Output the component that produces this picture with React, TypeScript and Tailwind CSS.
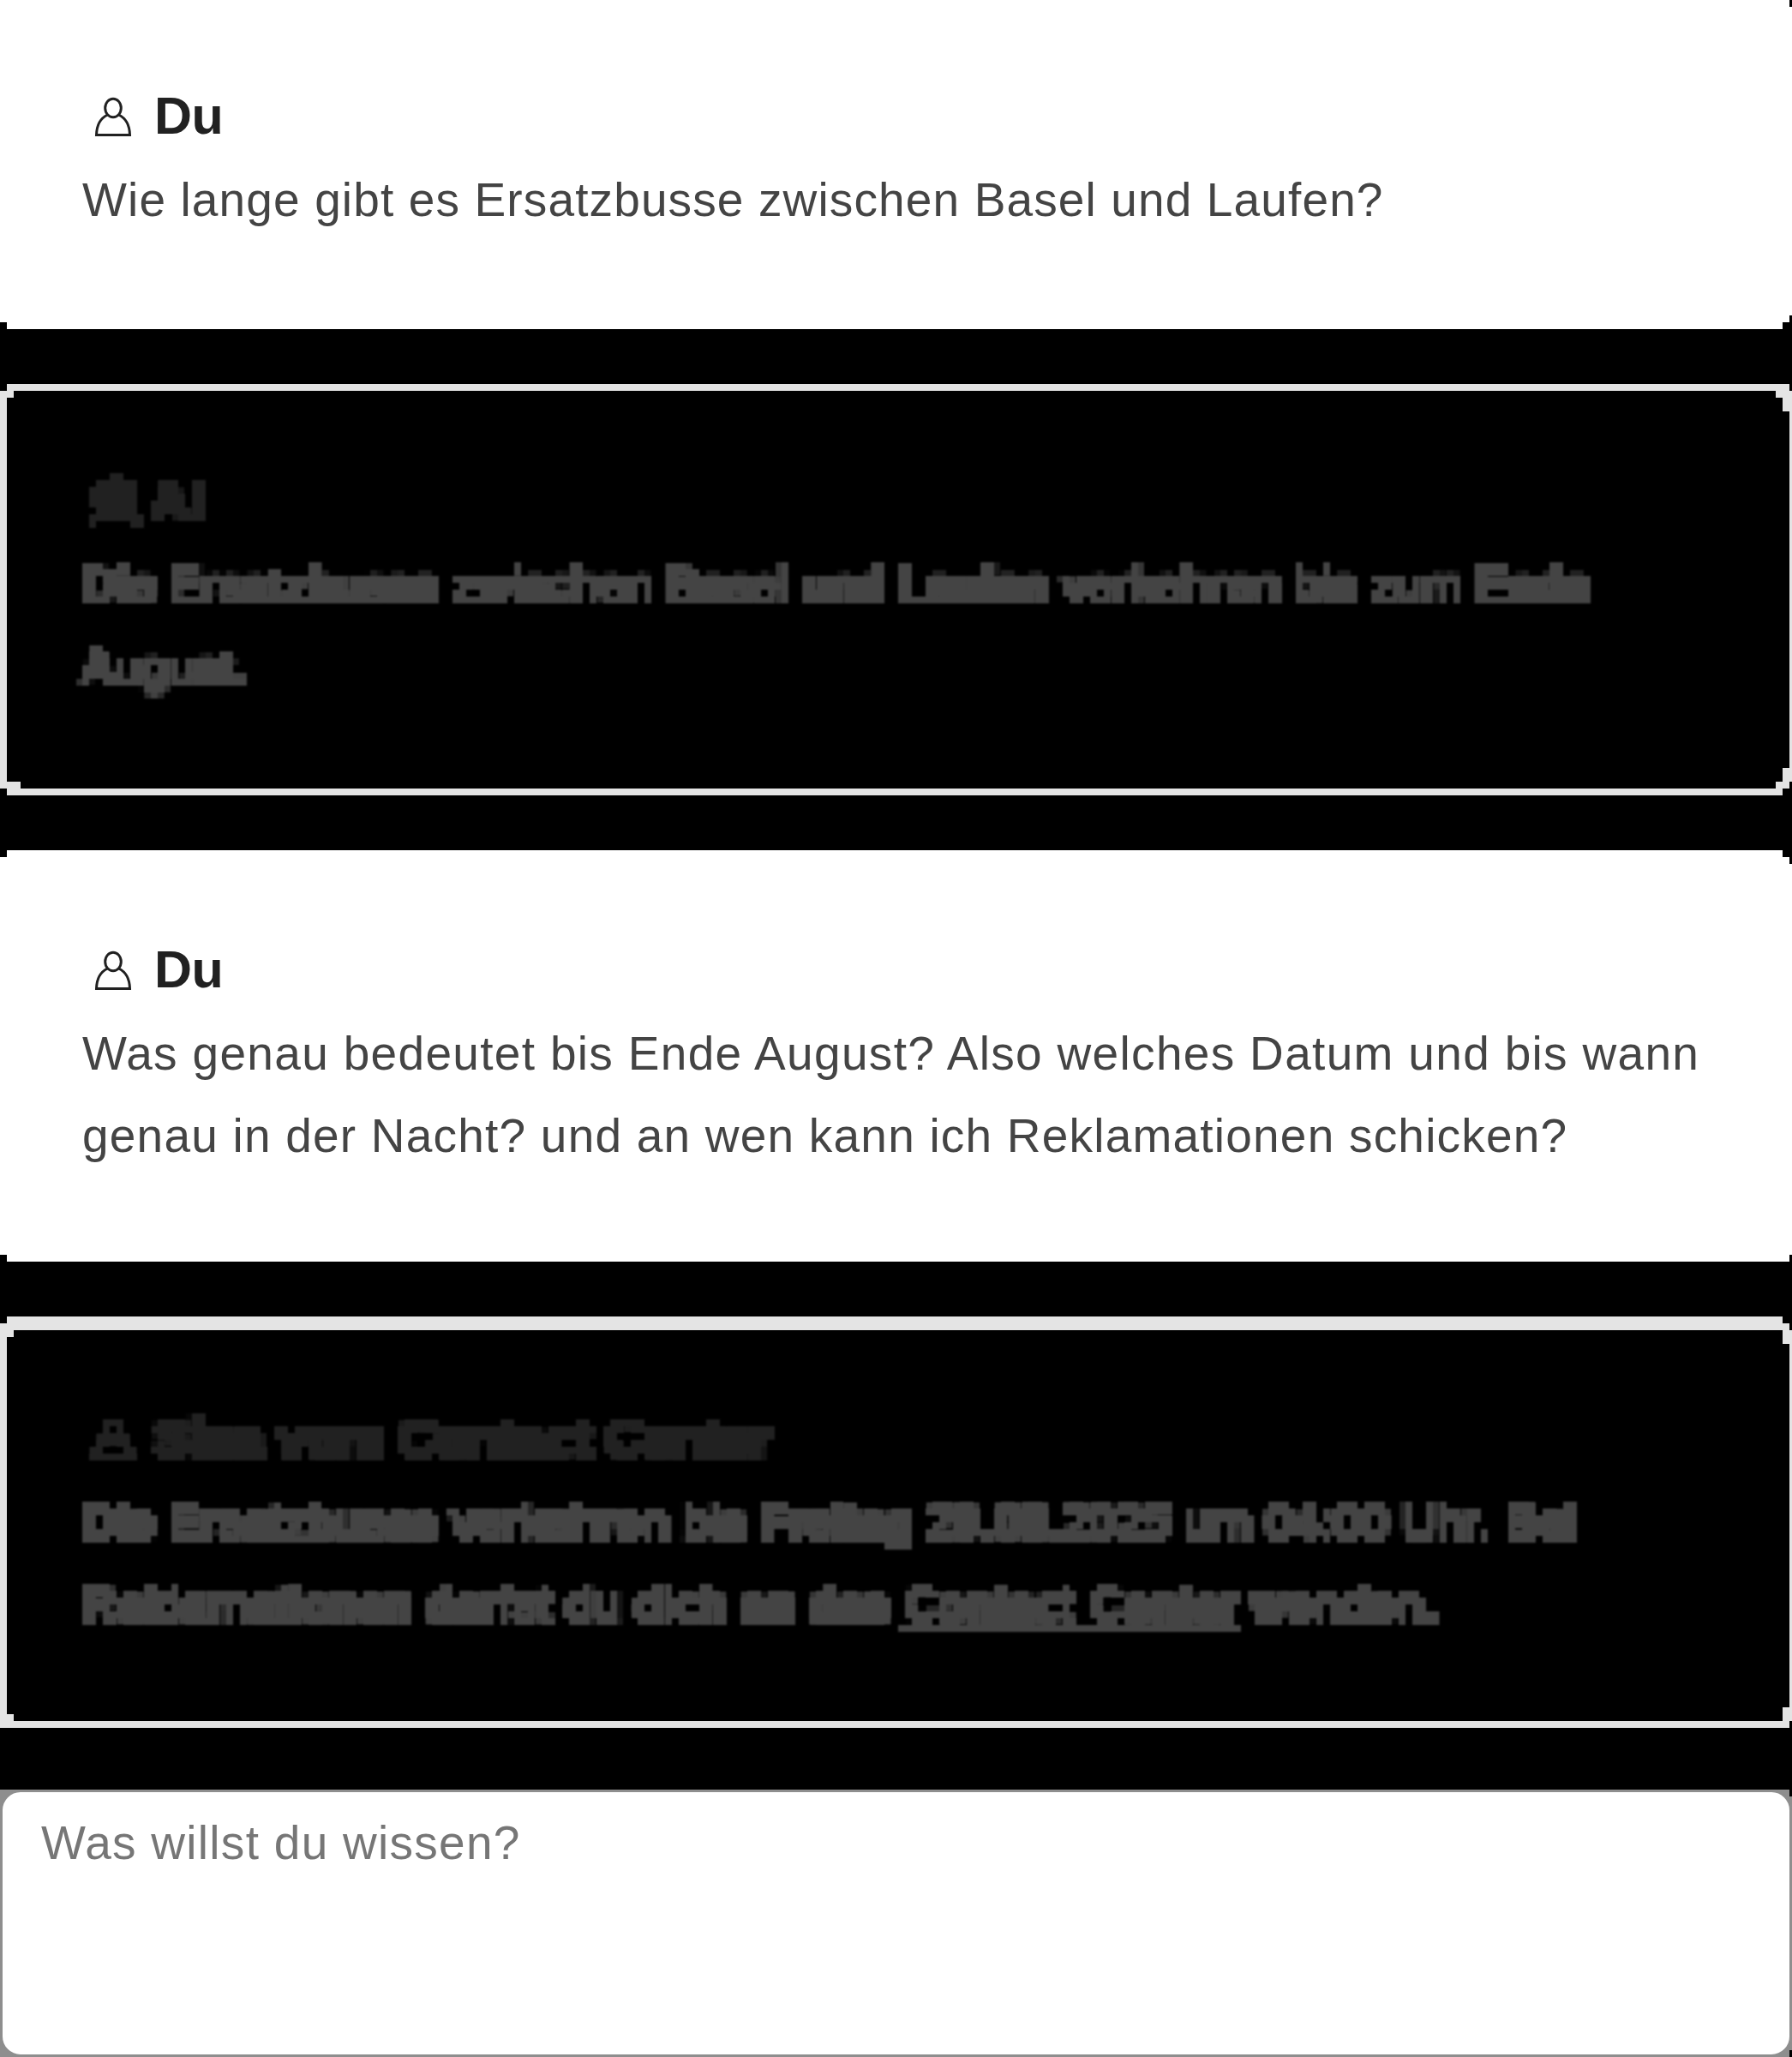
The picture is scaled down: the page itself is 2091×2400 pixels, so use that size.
import type { ReactNode } from "react";

function PersonIcon() {
  return (
    <svg viewBox="0 0 48 56" className="mt-1.5 h-14 w-12 shrink-0" fill="none" stroke="#212121" strokeWidth="3">
      <ellipse cx="24" cy="16" rx="9.3" ry="10.8" />
      <path d="M17.5 24C9 28 4.8 36 4.5 47.5H43.5C43.2 36 39 28 30.5 24" />
    </svg>
  );
}

function AssistantIcon() {
  return (
    <svg viewBox="0 0 64 64" className="size-16 shrink-0" fill="#212121" shapeRendering="crispEdges">
      <path d="M26 2H38V10H54V50H62V62H50V54H6V62H2V50H10V38H2V18H10V10H26Z" />
    </svg>
  );
}

/* Snaps whatever it is applied to onto an 8px block grid. */
function BlockFilter() {
  return (
    <svg className="absolute size-0" aria-hidden="true">
      <filter id="blocks" filterUnits="userSpaceOnUse" x="0" y="0" width="2096" height="480" colorInterpolationFilters="sRGB">
        <feMorphology in="SourceGraphic" operator="dilate" radius="3.5 3" result="thick" />
        <feFlood x="3" y="3" width="2" height="2" floodColor="#000" />
        <feComposite x="0" y="0" width="8" height="8" />
        <feTile x="0" y="0" width="2096" height="480" result="grid" />
        <feComposite in="thick" in2="grid" operator="in" />
        <feMorphology operator="dilate" radius="3" />
        <feGaussianBlur stdDeviation="1" />
      </filter>
    </svg>
  );
}

function Box({ className }: { className: string }) {
  return <i className={`absolute ${className}`} />;
}

function Name({ children, className = "tracking-[-0.5px]" }: { children: ReactNode; className?: string }) {
  return <h2 className={`text-[61px] leading-[96px] font-bold text-[#212121] ${className}`}>{children}</h2>;
}

function Line({ children, className = "tracking-[1.13px]" }: { children: ReactNode; className?: string }) {
  return <span className={`block ${className}`}>{children}</span>;
}

function Text({ children }: { children: ReactNode }) {
  return <p className="pt-0.5 text-[55px] leading-[96px] whitespace-nowrap text-[#444]">{children}</p>;
}

export default function App() {
  return (
    <main className="flex h-[2400px] w-[2091px] flex-col overflow-hidden bg-black font-['Liberation_Sans',Arial,sans-serif]">
      <BlockFilter />

      <section className="relative h-[384px] bg-white pt-[87px] pl-24">
        <div className="flex items-center pl-3">
          <PersonIcon />
          <div className="pl-6">
            <Name>Du</Name>
          </div>
        </div>
        <Text>
          <Line>Wie lange gibt es Ersatzbusse zwischen Basel und Laufen?</Line>
        </Text>
        <Box className="top-0 right-0 h-2 w-[3px] bg-black" />
        <Box className="bottom-0 left-0 size-2 bg-black" />
        <Box className="right-0 bottom-0 h-4 w-[3px] bg-black" />
        <Box className="right-[3px] bottom-0 size-2 bg-black" />
      </section>

      <section className="relative mt-16 h-[480px] border-y-8 border-r-[3px] border-l-8 border-[#e4e4e4] bg-black">
        <div className="-mt-2 -ml-2 h-[480px] w-[2091px] pt-[88px] pl-24 [filter:url(#blocks)]">
          <div className="flex h-24 items-center pl-2">
            <AssistantIcon />
            <div className="pl-2">
              <Name className="tracking-[4px]">AI</Name>
            </div>
          </div>
          <Text>
            <Line className="tracking-[1.03px]">Die Ersatzbusse zwischen Basel und Laufen verkehren bis zum Ende</Line>
            <Line className="tracking-[1.03px]">August.</Line>
          </Text>
        </div>
        <Box className="-top-2 -left-2 size-2 bg-black" />
        <Box className="top-0 left-0 size-2 bg-[#e4e4e4]" />
        <Box className="bottom-0 left-0 h-2 w-4 bg-[#e4e4e4]" />
        <Box className="-bottom-2 -left-2 size-2 bg-black" />
        <Box className="-top-2 -right-[3px] h-2 w-[3px] bg-black" />
        <Box className="top-0 right-0 h-2 w-4 bg-[#e4e4e4]" />
        <Box className="top-2 right-0 h-4 w-2 bg-[#e4e4e4]" />
        <Box className="right-0 bottom-2 h-4 w-2 bg-[#e4e4e4]" />
        <Box className="right-0 bottom-0 h-2 w-4 bg-[#e4e4e4]" />
        <Box className="-right-[3px] -bottom-2 h-4 w-[3px] bg-black" />
        <Box className="right-0 -bottom-2 size-2 bg-black" />
      </section>

      <section className="relative mt-16 h-[480px] bg-white pt-[91px] pl-24">
        <div className="flex items-center pl-3">
          <PersonIcon />
          <div className="pl-6">
            <Name>Du</Name>
          </div>
        </div>
        <Text>
          <Line className="tracking-[1.32px]">Was genau bedeutet bis Ende August? Also welches Datum und bis wann</Line>
          <Line className="tracking-[1.21px]">genau in der Nacht? und an wen kann ich Reklamationen schicken?</Line>
        </Text>
        <Box className="top-0 left-0 size-2 bg-black" />
        <Box className="top-0 right-0 h-4 w-[3px] bg-black" />
        <Box className="top-0 right-[3px] size-2 bg-black" />
        <Box className="bottom-0 left-0 size-2 bg-black" />
        <Box className="right-0 bottom-0 h-2 w-[3px] bg-black" />
      </section>

      <section className="relative mt-16 h-[480px] border-t-[16px] border-r-[3px] border-b-8 border-l-8 border-[#e4e4e4] bg-black">
        <div className="-mt-4 -ml-2 h-[480px] w-[2091px] pt-[94px] pl-24 [filter:url(#blocks)]">
          <div className="flex items-center pl-3">
            <PersonIcon />
            <div className="pl-6">
              <Name className="tracking-[-0.3px]">Sina vom Contact Center</Name>
            </div>
          </div>
          <Text>
            <Line className="tracking-[0.99px]">Die Ersatzbusse verkehren bis Freitag 29.08.2025 um 04:00 Uhr. Bei</Line>
            <Line className="tracking-[1.41px]">
              Reklamationen darfst du dich an das{" "}
              <a className="underline decoration-[3px] underline-offset-[6px]">Contact Center</a> wenden.
            </Line>
          </Text>
        </div>
        <Box className="-top-4 -left-2 size-2 bg-black" />
        <Box className="top-0 left-0 size-2 bg-[#e4e4e4]" />
        <Box className="bottom-0 left-0 size-2 bg-[#e4e4e4]" />
        <Box className="-top-4 -right-[3px] h-4 w-[3px] bg-black" />
        <Box className="-top-4 right-0 size-2 bg-black" />
        <Box className="top-0 right-0 h-4 w-2 bg-[#e4e4e4]" />
        <Box className="right-0 bottom-0 h-4 w-2 bg-[#e4e4e4]" />
        <Box className="-right-[3px] -bottom-2 h-2 w-[3px] bg-black" />
      </section>

      <div className="relative mt-[72px] h-[312px] bg-[#8e8e8e]">
        <textarea
          className="block size-full resize-none rounded-[24px] border-3 border-[#8e8e8e] bg-white px-[45px] pt-[11px] text-[55px] leading-[96px] tracking-[1.28px] outline-none placeholder:text-[#767676]"
          placeholder="Was willst du wissen?"
        />
        <Box className="top-0 right-0 h-2 w-[3px] bg-black" />
        <Box className="right-0 bottom-0 h-2 w-[3px] bg-black" />
      </div>
    </main>
  );
}
